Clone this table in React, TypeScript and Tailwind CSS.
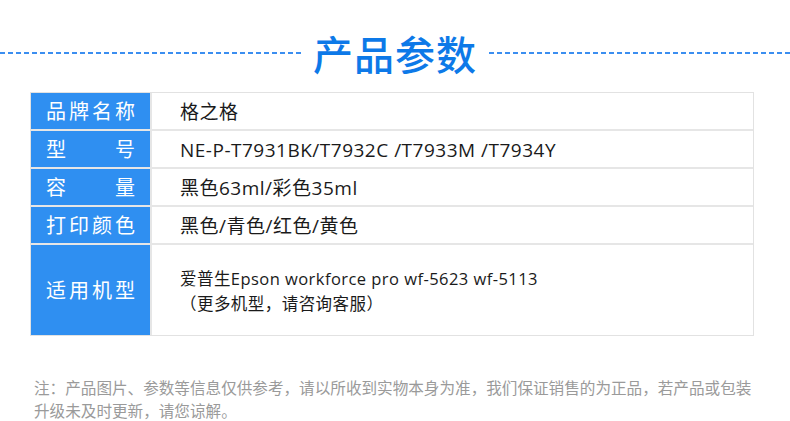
import React from 'react';

const rows: { label: string; value: React.ReactNode; tall?: boolean }[] = [
  { label: '品牌名称', value: '格之格' },
  { label: '型号', value: 'NE-P-T7931BK/T7932C /T7933M /T7934Y' },
  { label: '容量', value: '黑色63ml/彩色35ml' },
  { label: '打印颜色', value: '黑色/青色/红色/黄色' },
  {
    label: '适用机型',
    tall: true,
    value: (
      <div className="text-[16.5px] leading-[25px] tracking-[0.45px]">
        <p>爱普生Epson workforce pro wf-5623 wf-5113</p>
        <p>（更多机型，请咨询客服）</p>
      </div>
    ),
  },
];

const Dashes = () => (
  <div className="flex-1 h-[2px] bg-[repeating-linear-gradient(90deg,#3b8ef0_0_5px,transparent_5px_8px)]" />
);

export default function App() {
  return (
    <div
      className="w-[790px] h-[421px] bg-white overflow-hidden"
      style={{ fontFamily: '"Noto Sans CJK SC", "Noto Sans", sans-serif' }}
    >
      {/* heading */}
      <div className="flex items-center pt-[24px] h-[82px]">
        <Dashes />
        <h1 className="px-[12px] text-[40px] leading-[56px] font-medium text-[#0d79e8] tracking-[1px]">产品参数</h1>
        <Dashes />
      </div>

      {/* spec table */}
      <div className="mx-[30px] mt-[10px] w-[724px] border border-[#e2e2e2]">
        {rows.map((r, i) => (
          <div
            key={r.label}
            className={`flex ${r.tall ? 'h-[90px]' : 'h-[38px]'} ${i < rows.length - 1 ? 'border-b-2 border-[#e6e6e6]' : ''}`}
          >
            <div className="w-[121px] bg-[#2f8ff1] flex items-center px-[15px] border-r-2 border-[#e6e6e6]">
              <span className="w-full text-white text-[20px] leading-none [text-align-last:justify]">{r.label}</span>
            </div>
            <div
              className="flex-1 flex items-center pl-[28px] pt-[2px] text-[#1a1a1a] text-[19px] tracking-[0.5px]"
              style={{ fontFamily: '"Open Sans", "Noto Sans CJK SC", sans-serif' }}
            >
              {r.value}
            </div>
          </div>
        ))}
      </div>

      {/* note */}
      <p className="mt-[40px] ml-[34px] text-[15.6px] leading-[23px] text-[#9a9a9a]">
        注：产品图片、参数等信息仅供参考，请以所收到实物本身为准，我们保证销售的为正品，若产品或包装
        <br />
        升级未及时更新，请您谅解。
      </p>
    </div>
  );
}
